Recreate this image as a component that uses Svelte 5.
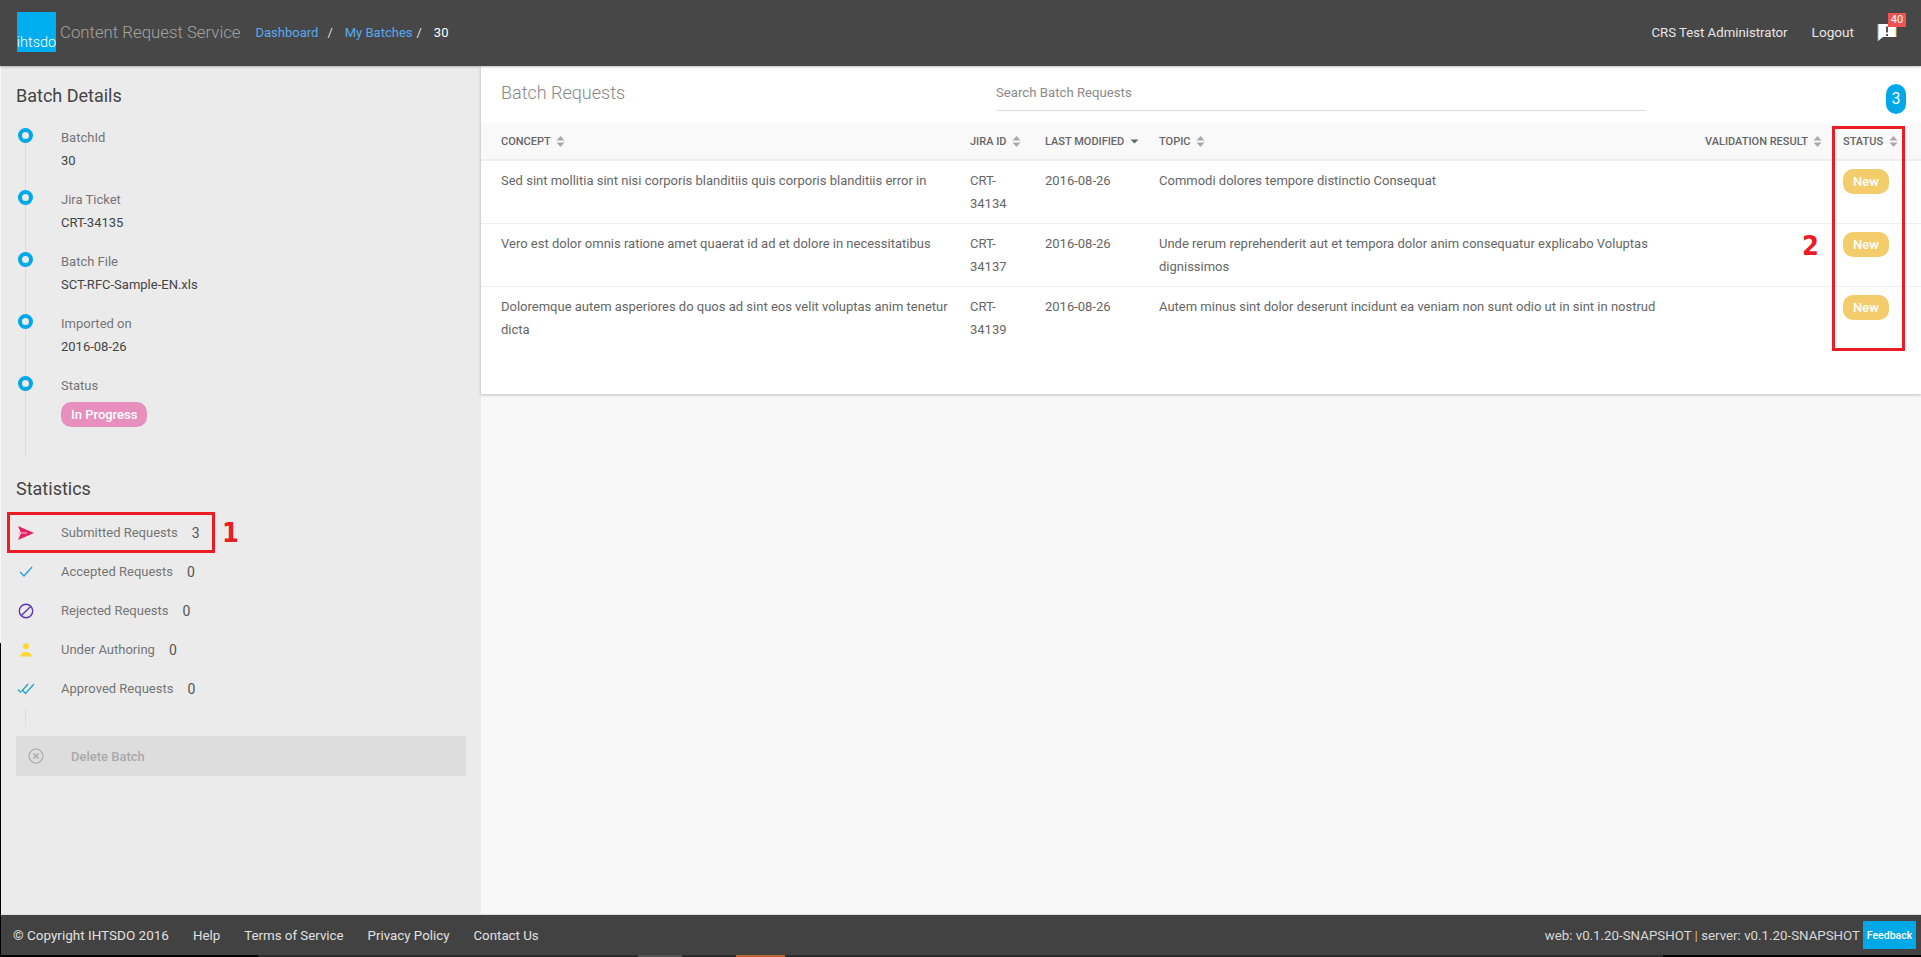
<script>
  const details = [
    { label: 'BatchId', value: '30' },
    { label: 'Jira Ticket', value: 'CRT-34135' },
    { label: 'Batch File', value: 'SCT-RFC-Sample-EN.xls' },
    { label: 'Imported on', value: '2016-08-26' }
  ];

  const stats = [
    { key: 'send', label: 'Submitted Requests', count: 3 },
    { key: 'check', label: 'Accepted Requests', count: 0 },
    { key: 'ban', label: 'Rejected Requests', count: 0 },
    { key: 'person', label: 'Under Authoring', count: 0 },
    { key: 'double', label: 'Approved Requests', count: 0 }
  ];

  const columns = [
    { label: 'Concept', cls: 'c-concept' },
    { label: 'Jira ID', cls: 'c-jira' },
    { label: 'Last Modified', cls: 'c-date', sorted: true },
    { label: 'Topic', cls: 'c-topic' },
    { label: 'Validation Result', cls: 'c-valid' },
    { label: 'Status', cls: 'c-status' }
  ];

  const rows = [
    {
      concept: 'Sed sint mollitia sint nisi corporis blanditiis quis corporis blanditiis error in',
      jira: 'CRT-34134',
      topic: 'Commodi dolores tempore distinctio Consequat'
    },
    {
      concept: 'Vero est dolor omnis ratione amet quaerat id ad et dolore in necessitatibus',
      jira: 'CRT-34137',
      topic: 'Unde rerum reprehenderit aut et tempora dolor anim consequatur explicabo Voluptas dignissimos'
    },
    {
      concept: 'Doloremque autem asperiores do quos ad sint eos velit voluptas anim tenetur dicta',
      jira: 'CRT-34139',
      topic: 'Autem minus sint dolor deserunt incidunt ea veniam non sunt odio ut in sint in nostrud'
    }
  ];
</script>

<div class="page">
  <header class="topbar">
    <div class="logo"><span>ihtsdo</span></div>
    <div class="app-title">Content Request Service</div>
    <nav class="crumbs">
      <a href="#dashboard">Dashboard</a>
      <span class="sep">/</span>
      <a href="#batches">My Batches</a>
      <span class="sep tight">/</span>
      <span class="current">30</span>
    </nav>
    <div class="user">
      <span class="user-name">CRS Test Administrator</span>
      <span class="logout">Logout</span>
      <div class="notify">
        <svg width="20" height="19" viewBox="0 0 20 19">
          <path d="M1 1h18v13H6l-5 4z" fill="#fff" />
          <path d="M1 1v17" stroke="#6cb6e0" stroke-width="1" fill="none" />
          <path d="M19 1v13" stroke="#eec25c" stroke-width="1" fill="none" />
          <path d="M9 3.5h2v6H9zM9 11h2v2H9z" fill="#555" />
        </svg>
        <span class="notify-count">40</span>
      </div>
    </div>
  </header>

  <div class="body">
    <aside class="sidebar">
      <h2>Batch Details</h2>
      <ul class="timeline">
        {#each details as item}
          <li class="detail">
            <span class="dot"></span>
            <div class="label">{item.label}</div>
            <div class="value">{item.value}</div>
          </li>
        {/each}
        <li class="detail">
          <span class="dot"></span>
          <div class="label">Status</div>
          <div class="pill-row"><span class="pill">In Progress</span></div>
        </li>
      </ul>

      <h2 class="stats-title">Statistics</h2>
      <ul class="stats">
        {#each stats as stat}
          <li class="stat">
            <span class="stat-icon">
              {#if stat.key === 'send'}
                <svg width="16" height="14" viewBox="0 0 16 14">
                  <path d="M0 0l16 7H3zM0 14l16-7H3z" fill="#e91e63" />
                  <path d="M0 6.4h9v1.2H0z" fill="#f8a8c4" />
                </svg>
              {:else if stat.key === 'check'}
                <svg width="14" height="11" viewBox="0 0 14 11">
                  <path d="M1 6l4 4 8-9" fill="none" stroke="#2a9fd8" stroke-width="1.4" />
                </svg>
              {:else if stat.key === 'ban'}
                <svg width="16" height="16" viewBox="0 0 16 16">
                  <circle cx="8" cy="8" r="6.7" fill="none" stroke="#5e35b1" stroke-width="1.4" />
                  <path d="M3.4 12.6l9.2-9.2" stroke="#5e35b1" stroke-width="1.4" />
                </svg>
              {:else if stat.key === 'person'}
                <svg width="14" height="14" viewBox="0 0 14 14">
                  <circle cx="7" cy="3.2" r="3" fill="#fdd835" />
                  <path d="M1 13.5c0-3 3-4.500 6-4.500s6 1.500 6 4.500z" fill="#fdd835" />
                </svg>
              {:else}
                <svg width="18" height="12" viewBox="0 0 18 12">
                  <path d="M1 6.500l3 3M5 6.500l3.500 4L17 1M4.500 8.500L11 1" fill="none" stroke="#26a5c4" stroke-width="1.300" />
                </svg>
              {/if}
            </span>
            <span class="stat-label">{stat.label}</span>
            <span class="stat-count">{stat.count}</span>
          </li>
        {/each}
      </ul>

      <button class="delete" type="button">
        <svg width="16" height="16" viewBox="0 0 16 16">
          <circle cx="8" cy="8" r="7" fill="none" stroke="#a9a9a9" stroke-width="1.2" />
          <path d="M5.500 5.500l5 5M10.500 5.500l-5 5" stroke="#a9a9a9" stroke-width="1.400" />
        </svg>
        <span>Delete Batch</span>
      </button>
    </aside>

    <main class="content">
      <section class="card">
        <div class="card-head">
          <h1>Batch Requests</h1>
          <div class="search">Search Batch Requests</div>
          <span class="total">3</span>
        </div>
        <table>
          <thead>
            <tr>
              {#each columns as col}
                <th class={col.cls}>
                  {col.label}
                  {#if col.sorted}
                    <svg class="sort" width="9" height="13" viewBox="0 0 9 13">
                      <path d="M0.500 4.500h8l-4 4z" fill="#666" />
                    </svg>
                  {:else}
                    <svg class="sort" width="9" height="13" viewBox="0 0 9 13">
                      <path d="M0.500 5.500l4-4.500 4 4.500zM0.500 7.500l4 4.500 4-4.500z" fill="#aaa" />
                    </svg>
                  {/if}
                </th>
              {/each}
            </tr>
          </thead>
          <tbody>
            {#each rows as row}
              <tr>
                <td>{row.concept}</td>
                <td>{row.jira.replace('-', '- ')}</td>
                <td>2016-08-26</td>
                <td>{row.topic}</td>
                <td></td>
                <td><span class="badge">New</span></td>
              </tr>
            {/each}
          </tbody>
        </table>
      </section>
    </main>
  </div>

  <footer class="footer">
    <span class="copyright">© Copyright IHTSDO 2016</span>
    <a href="#help">Help</a>
    <a href="#terms">Terms of Service</a>
    <a href="#privacy">Privacy Policy</a>
    <a href="#contact">Contact Us</a>
    <div class="versions">
      web: v0.1.20-SNAPSHOT <span class="bar">|</span> server: v0.1.20-SNAPSHOT
    </div>
    <button class="feedback" type="button">Feedback</button>
  </footer>
  <div class="taskbar"><i class="t1"></i><i class="t2"></i><i class="t3"></i><i class="t4"></i></div>

  <!-- annotations drawn over the screenshot -->
  <div class="mark box-one"></div>
  <div class="mark-num num-one">1</div>
  <div class="mark box-two"></div>
  <div class="mark-num num-two">2</div>
  <div class="edge"></div>
</div>

<style>
  :global(body) {
    margin: 0;
    background: #f8f8f8;
  }

  .page {
    position: relative;
    display: flex;
    flex-direction: column;
    height: 957px;
    overflow: hidden;
    font-family: Roboto, sans-serif;
    font-size: 13px;
    color: #666;
  }

  .topbar {
    display: flex;
    align-items: center;
    flex: none;
    height: 66px;
    padding: 0 15px 0 17px;
    box-sizing: border-box;
    background: #474747;
    box-shadow: 0 1px 2px rgba(0, 0, 0, 0.25);
    position: relative;
    z-index: 1;
  }

  .logo {
    display: flex;
    align-items: flex-end;
    justify-content: center;
    width: 39px;
    height: 40px;
    background: #00aeef;
    color: #fff;
    font-size: 14.5px;
    font-weight: 300;
    line-height: 19px;
    margin-top: -2px;
  }

  .app-title {
    margin: -2px 0 0 4px;
    font-size: 16.8px;
    font-weight: 300;
    color: #a3a3a3;
  }

  .crumbs {
    display: flex;
    align-items: center;
    margin: -2px 0 0 15px;
    font-size: 13px;
    color: #ddd;
  }

  .crumbs a {
    color: #5aa9ee;
    text-decoration: none;
  }

  .sep {
    margin: 0 12px 0 9px;
  }

  .sep.tight {
    margin: 0 12px 0 4px;
  }

  .current {
    color: #fff;
  }

  .user {
    display: flex;
    align-items: center;
    gap: 24px;
    margin-left: auto;
    font-size: 13.6px;
    color: #e6e6e6;
  }

  .user > span {
    margin-top: -2px;
  }

  .user-name {
    font-size: 13.2px;
  }

  .logout {
    margin-right: -1px;
  }

  .notify {
    position: relative;
    width: 29px;
    height: 20px;
  }

  .notify svg {
    display: block;
  }

  .notify-count {
    position: absolute;
    left: 11px;
    top: -10px;
    width: 18px;
    height: 14px;
    background: #ef5350;
    color: #fff;
    font-size: 11px;
    line-height: 14px;
    text-align: center;
  }

  .body {
    display: flex;
    flex: 1;
    min-height: 0;
  }

  .sidebar {
    flex: none;
    width: 481px;
    box-sizing: border-box;
    padding: 19px 15px 0 16px;
    background: #ebebeb;
  }

  h2 {
    margin: 0;
    font-size: 18px;
    font-weight: 400;
    line-height: 22px;
    color: #444;
  }

  ul {
    list-style: none;
    margin: 0;
    padding: 0;
    position: relative;
  }

  .timeline::before,
  .stats::before {
    content: '';
    position: absolute;
    left: 9px;
    top: 4px;
    bottom: 0;
    width: 1px;
    background: #dcdcdc;
  }

  .timeline {
    margin-top: 19px;
    height: 331px;
  }

  .detail {
    position: relative;
    height: 62px;
    padding-left: 45px;
    line-height: 23px;
  }

  .dot {
    position: absolute;
    left: 2px;
    top: 2px;
    width: 7px;
    height: 7px;
    border: 4px solid #00a8e8;
    border-radius: 50%;
    background: #ebebeb;
  }

  .label {
    color: #757575;
  }

  .value {
    color: #444;
  }

  .pill-row {
    margin-top: 5px;
    line-height: 0;
  }

  .pill {
    display: inline-block;
    height: 25px;
    padding: 0 10px;
    border-radius: 10px;
    background: #e78fbd;
    color: #fff;
    font-weight: 500;
    line-height: 25px;
  }

  .stats-title {
    margin-top: 21px;
  }

  .stats {
    margin-top: 13px;
    padding-bottom: 18px;
  }

  .stat {
    position: relative;
    display: flex;
    align-items: center;
    height: 39px;
    padding-left: 45px;
  }

  .stat-icon {
    position: absolute;
    left: 0;
    top: 0;
    display: flex;
    align-items: center;
    justify-content: center;
    width: 19px;
    height: 39px;
    background: #ebebeb;
  }

  .stat-label {
    color: #757575;
  }

  .stat-count {
    margin-left: 14px;
    font-size: 14px;
    color: #555;
  }

  .delete {
    display: flex;
    align-items: center;
    width: 450px;
    height: 40px;
    margin-top: 10px;
    padding: 0 0 0 12px;
    border: 0;
    background: #dddddd;
    font: 500 13px Roboto, sans-serif;
    color: #aaa;
  }

  .delete span {
    margin-left: 27px;
  }

  .content {
    flex: 1;
    min-width: 0;
    background: #f8f8f8;
  }

  .card {
    height: 328px;
    background: #fff;
    box-shadow: 0 1px 3px rgba(0, 0, 0, 0.25);
  }

  .card-head {
    position: relative;
    display: flex;
    height: 57px;
    padding-left: 20px;
  }

  h1 {
    width: 495px;
    margin: 15px 0 0;
    font-size: 18px;
    font-weight: 300;
    line-height: 24px;
    color: #888;
  }

  .search {
    width: 650px;
    height: 44px;
    line-height: 54px;
    border-bottom: 1px solid #ddd;
    color: #8a8a8a;
    font-size: 13.2px;
  }

  .total {
    position: absolute;
    left: 1405px;
    top: 18px;
    width: 20px;
    height: 30px;
    border-radius: 10px;
    background: #00a8e8;
    color: #fff;
    font-size: 16px;
    line-height: 30px;
    text-align: center;
  }

  table {
    width: 1440px;
    border-collapse: collapse;
    table-layout: fixed;
  }

  th {
    height: 37px;
    padding: 0 10px;
    box-sizing: border-box;
    background: #f9f9f9;
    border-bottom: 2px solid #eee;
    font-size: 11px;
    font-weight: 500;
    text-align: left;
    text-transform: uppercase;
    white-space: nowrap;
    color: #666;
  }

  .sort {
    margin-left: 3px;
    vertical-align: -3px;
  }

  .c-concept { width: 479px; padding-left: 20px; }
  .c-jira { width: 75px; }
  .c-date { width: 114px; }
  .c-topic { width: 546px; }
  .c-valid { width: 138px; }
  .c-status { width: 88px; }

  td {
    padding: 8px 10px 8px;
    vertical-align: top;
    border-bottom: 1px solid #eee;
    line-height: 23px;
    color: #666;
  }

  td:first-child {
    padding-left: 20px;
  }

  tbody tr:last-child td {
    border-bottom: 0;
  }

  .badge {
    display: block;
    width: 46px;
    height: 25px;
    border-radius: 10px;
    background: #f3cd6b;
    color: #fff;
    font-weight: 500;
    line-height: 25px;
    text-align: center;
  }

  .footer {
    display: flex;
    align-items: center;
    flex: none;
    height: 40px;
    padding: 0 5px 0 13px;
    background: #424242;
    border-top: 1px solid #ddd;
    margin-top: -1px;
    font-size: 13.3px;
    color: #e0e0e0;
  }

  .copyright {
    font-size: 13.5px;
  }

  .footer a {
    margin-left: 24px;
    color: inherit;
    text-decoration: none;
  }

  .versions {
    margin-left: auto;
    color: #d8d8d8;
  }

  .bar {
    color: #e8b84a;
  }

  .feedback {
    width: 53px;
    height: 28px;
    margin-left: 3px;
    padding: 0;
    border: 0;
    background: #00a8e8;
    color: #fff;
    font: 500 10.5px Roboto, sans-serif;
  }

  .taskbar {
    position: relative;
    flex: none;
    height: 2px;
    background: #2b2b2b;
  }

  .taskbar i {
    position: absolute;
    top: 0;
    height: 2px;
  }

  .t1 { left: 0; width: 258px; background: #000; }
  .t2 { left: 638px; width: 44px; background: #555; }
  .t3 { left: 736px; width: 49px; background: #b8672a; }
  .t4 { left: 1663px; width: 258px; background: #000; }

  .mark {
    position: absolute;
    border: 3px solid #ed1c24;
    box-sizing: border-box;
  }

  .box-one {
    left: 7px;
    top: 512px;
    width: 208px;
    height: 41px;
  }

  .box-two {
    left: 1832px;
    top: 126px;
    width: 73px;
    height: 225px;
  }

  .mark-num {
    position: absolute;
    font-family: 'DejaVu Sans', sans-serif;
    font-size: 27px;
    font-stretch: condensed;
    font-weight: 700;
    line-height: 30px;
    color: #ed1c24;
  }

  .num-one {
    left: 222px;
    top: 518px;
  }

  .num-two {
    left: 1802px;
    top: 231px;
  }

  .edge {
    position: absolute;
    left: 0;
    top: 0;
    width: 1px;
    height: 957px;
    background: linear-gradient(to bottom, #00a8e8 0 41px, #474747 41px 66px, #f8f8f8 66px 643px, #000 643px);
  }
</style>
